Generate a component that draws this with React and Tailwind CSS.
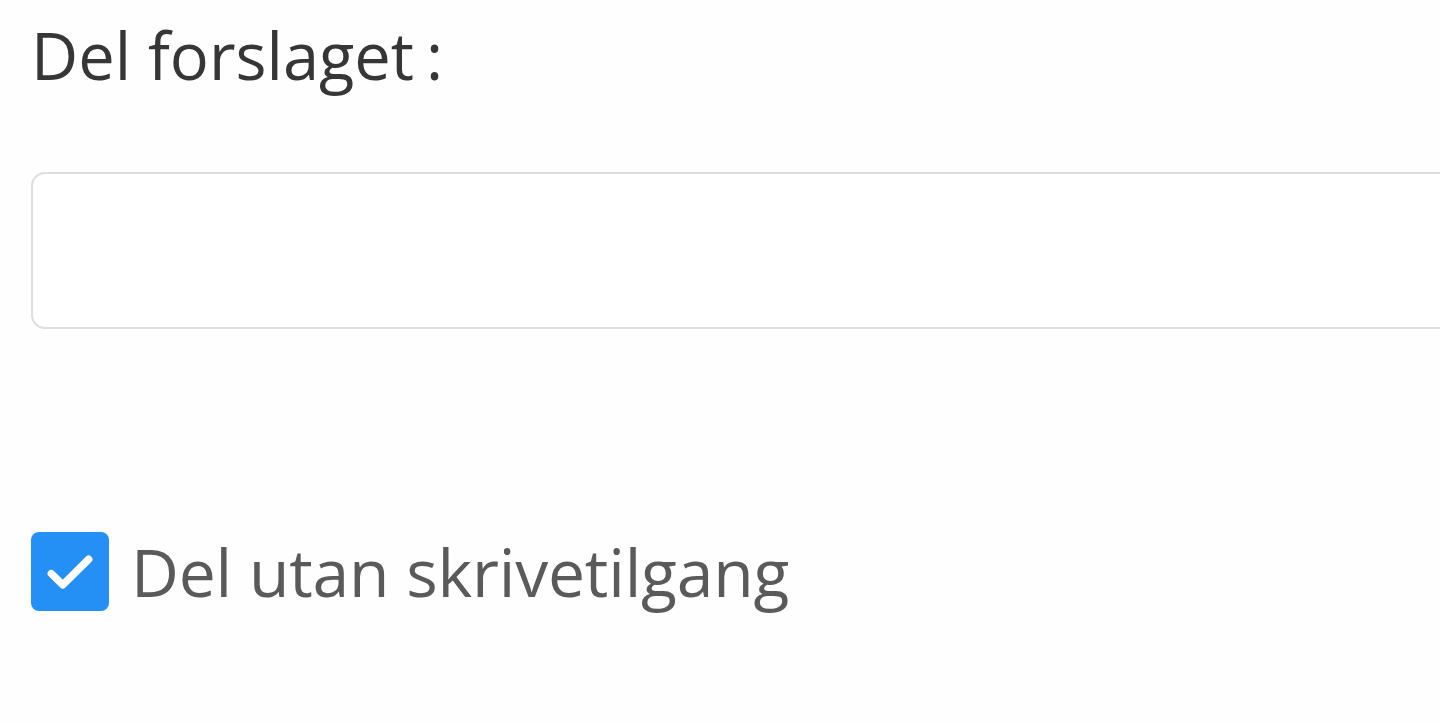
import React from 'react';

function CheckIcon() {
  return (
    <svg viewBox="0 0 24 24" className="w-[64px] h-[64px]" fill="none" stroke="white" strokeWidth="2.8" strokeLinecap="round" strokeLinejoin="round">
      <path d="M5 13l4.3 4.2L19 7.6" />
    </svg>
  );
}

export default function App() {
  return (
    <div className="w-[1440px] h-[723px] overflow-hidden bg-[#fefefe] pl-[31px] font-['Open_Sans',sans-serif]">
      {/* --- title --- */}
      <div className="pt-[10px] h-[172px]">
        <h1 className="text-[65px] leading-[90px] text-[#363636] font-normal">
          Del forslaget<span className="ml-[12px]">:</span>
        </h1>
      </div>

      {/* --- input --- */}
      <div className="w-[1500px] h-[157px] border-2 border-[#dedede] rounded-[14px] bg-white" />

      {/* --- checkbox row --- */}
      <label className="mt-[202px] flex items-center gap-[22px]">
        <span className="w-[78px] h-[79px] rounded-[8px] bg-[#2490f5] flex items-center justify-center">
          <CheckIcon />
        </span>
        <span className="text-[66px] leading-[80px] text-[#5a5a5a] tracking-[-0.2px]">Del utan skrivetilgang</span>
      </label>
    </div>
  );
}
